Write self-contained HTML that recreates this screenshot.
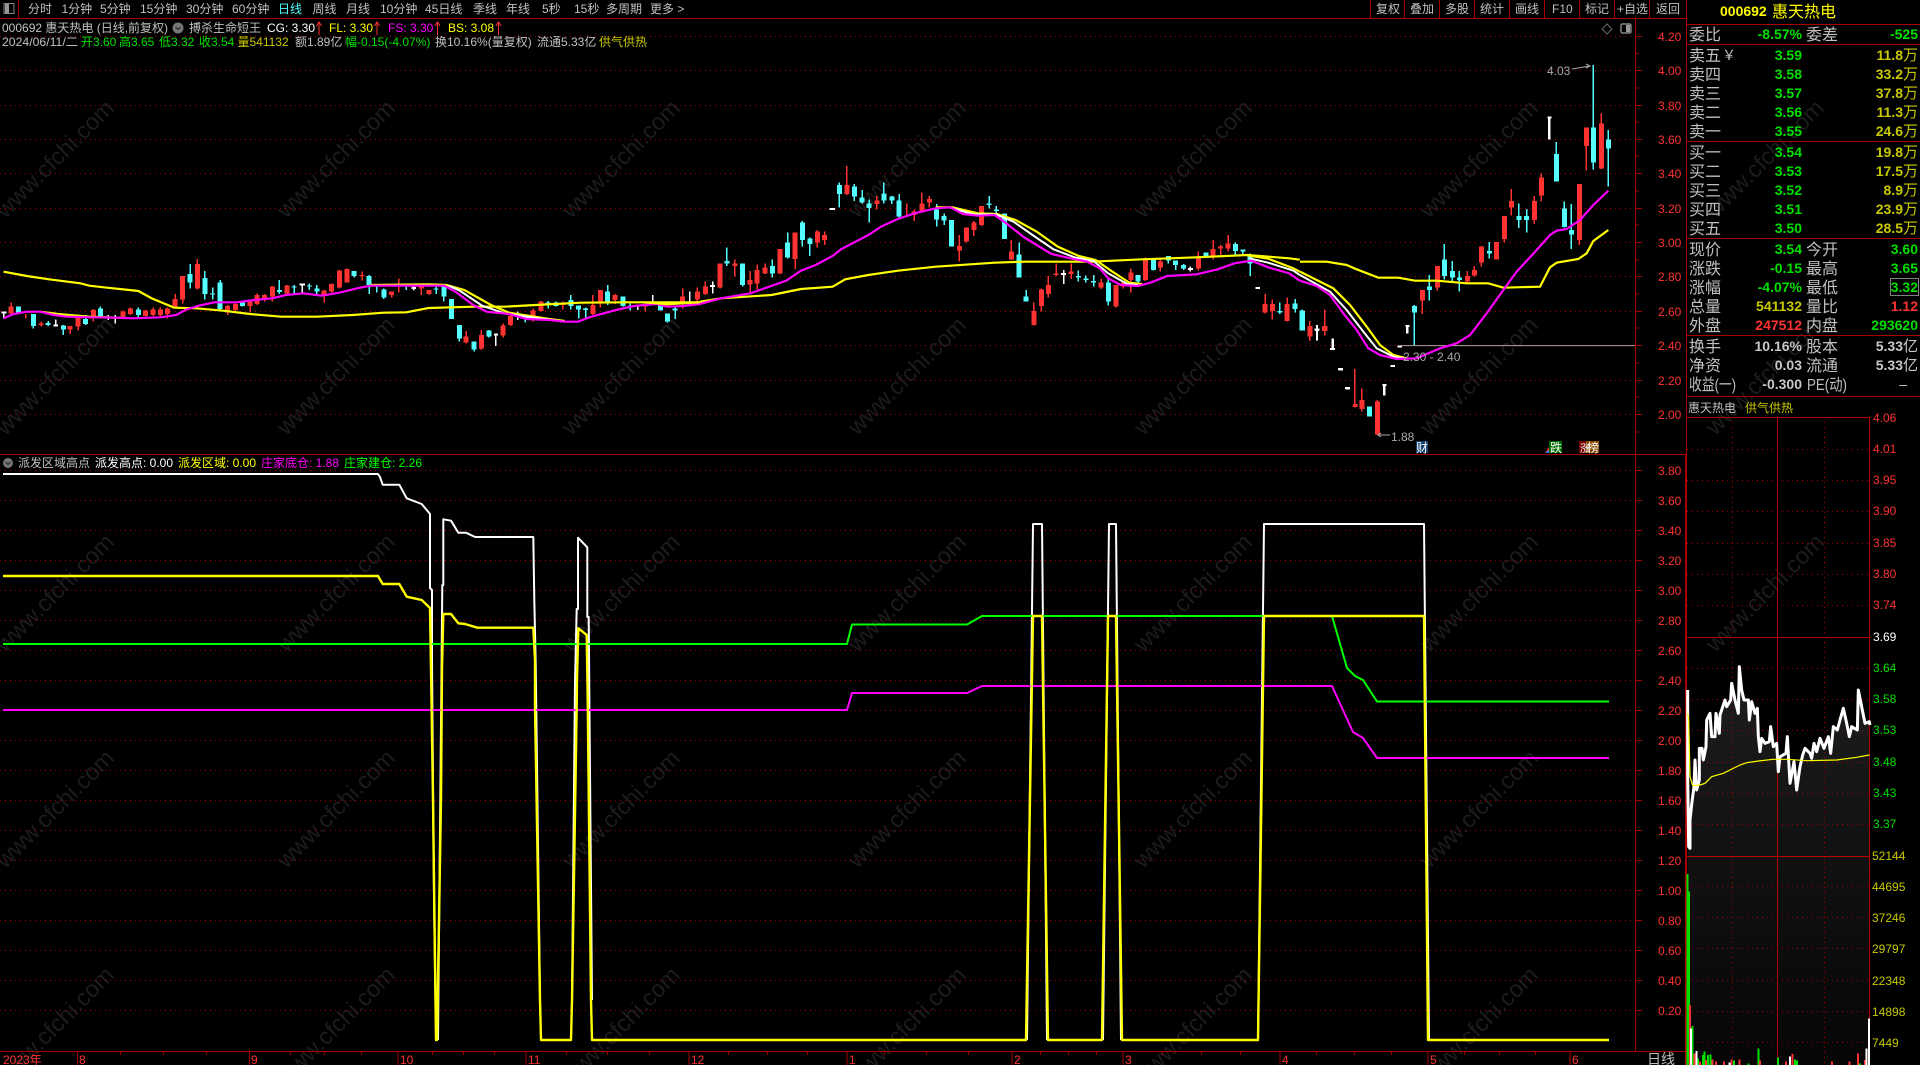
<!DOCTYPE html>
<html lang="zh"><head><meta charset="utf-8"><title>000692 惠天热电</title>
<style>
html,body{margin:0;padding:0;background:#000;width:1920px;height:1065px;overflow:hidden}
svg{display:block;position:absolute;left:0;top:0}
text{font-family:"Liberation Sans","WenQuanYi Zen Hei","Noto Sans CJK SC",sans-serif;font-size:12px;fill:#c0c0c0}
.v path,.v polyline{vector-effect:non-scaling-stroke;fill:none}
.wm text{font-size:23.5px;fill:#1c1c1c}
.ax text{fill:#ff3232}
.l text{font-size:16px}
.n text{font-weight:bold;font-size:14px;text-anchor:end}
.g{fill:#00e000!important}.o{fill:#c8c800!important}.r{fill:#ff3232!important}.w{fill:#c8c8c8!important}
.u{font-weight:normal;font-size:15px}
.gd line{stroke:#a00000;stroke-dasharray:1 4;stroke-width:1}
.sl line,.sl path{stroke:#a80000;stroke-width:1;fill:none}
.cr{shape-rendering:crispEdges}
</style></head><body>
<svg width="1920" height="1065" viewBox="0 0 1920 1065" xmlns="http://www.w3.org/2000/svg">
<defs><linearGradient id="fg" x1="0" y1="0" x2="0" y2="1"><stop offset="0" stop-color="#1e1e1e"/><stop offset=".45" stop-color="#121212"/><stop offset="1" stop-color="#060606"/></linearGradient></defs>
<rect width="1920" height="1065" fill="#000"/>

<!-- watermark -->
<g class="wm">
<text transform="translate(54,158) rotate(-45)" text-anchor="middle" y="9">www.cfchi.com</text>
<text transform="translate(335,158) rotate(-45)" text-anchor="middle" y="9">www.cfchi.com</text>
<text transform="translate(620,158) rotate(-45)" text-anchor="middle" y="9">www.cfchi.com</text>
<text transform="translate(906,158) rotate(-45)" text-anchor="middle" y="9">www.cfchi.com</text>
<text transform="translate(1192,158) rotate(-45)" text-anchor="middle" y="9">www.cfchi.com</text>
<text transform="translate(1478,158) rotate(-45)" text-anchor="middle" y="9">www.cfchi.com</text>
<text transform="translate(1764,158) rotate(-45)" text-anchor="middle" y="9">www.cfchi.com</text>
<text transform="translate(54,375) rotate(-45)" text-anchor="middle" y="9">www.cfchi.com</text>
<text transform="translate(335,375) rotate(-45)" text-anchor="middle" y="9">www.cfchi.com</text>
<text transform="translate(620,375) rotate(-45)" text-anchor="middle" y="9">www.cfchi.com</text>
<text transform="translate(906,375) rotate(-45)" text-anchor="middle" y="9">www.cfchi.com</text>
<text transform="translate(1192,375) rotate(-45)" text-anchor="middle" y="9">www.cfchi.com</text>
<text transform="translate(1478,375) rotate(-45)" text-anchor="middle" y="9">www.cfchi.com</text>
<text transform="translate(1764,375) rotate(-45)" text-anchor="middle" y="9">www.cfchi.com</text>
<text transform="translate(54,592) rotate(-45)" text-anchor="middle" y="9">www.cfchi.com</text>
<text transform="translate(335,592) rotate(-45)" text-anchor="middle" y="9">www.cfchi.com</text>
<text transform="translate(620,592) rotate(-45)" text-anchor="middle" y="9">www.cfchi.com</text>
<text transform="translate(906,592) rotate(-45)" text-anchor="middle" y="9">www.cfchi.com</text>
<text transform="translate(1192,592) rotate(-45)" text-anchor="middle" y="9">www.cfchi.com</text>
<text transform="translate(1478,592) rotate(-45)" text-anchor="middle" y="9">www.cfchi.com</text>
<text transform="translate(1764,592) rotate(-45)" text-anchor="middle" y="9">www.cfchi.com</text>
<text transform="translate(54,808) rotate(-45)" text-anchor="middle" y="9">www.cfchi.com</text>
<text transform="translate(335,808) rotate(-45)" text-anchor="middle" y="9">www.cfchi.com</text>
<text transform="translate(620,808) rotate(-45)" text-anchor="middle" y="9">www.cfchi.com</text>
<text transform="translate(906,808) rotate(-45)" text-anchor="middle" y="9">www.cfchi.com</text>
<text transform="translate(1192,808) rotate(-45)" text-anchor="middle" y="9">www.cfchi.com</text>
<text transform="translate(1478,808) rotate(-45)" text-anchor="middle" y="9">www.cfchi.com</text>
<text transform="translate(1764,808) rotate(-45)" text-anchor="middle" y="9">www.cfchi.com</text>
<text transform="translate(54,1025) rotate(-45)" text-anchor="middle" y="9">www.cfchi.com</text>
<text transform="translate(335,1025) rotate(-45)" text-anchor="middle" y="9">www.cfchi.com</text>
<text transform="translate(620,1025) rotate(-45)" text-anchor="middle" y="9">www.cfchi.com</text>
<text transform="translate(906,1025) rotate(-45)" text-anchor="middle" y="9">www.cfchi.com</text>
<text transform="translate(1192,1025) rotate(-45)" text-anchor="middle" y="9">www.cfchi.com</text>
<text transform="translate(1478,1025) rotate(-45)" text-anchor="middle" y="9">www.cfchi.com</text>
<text transform="translate(1764,1025) rotate(-45)" text-anchor="middle" y="9">www.cfchi.com</text>
</g>

<!-- grids -->
<g class="gd cr">
<line x1="0" x2="1635" y1="36.5" y2="36.5"/><line x1="0" x2="1635" y1="70.5" y2="70.5"/><line x1="0" x2="1635" y1="105.5" y2="105.5"/><line x1="0" x2="1635" y1="139.5" y2="139.5"/><line x1="0" x2="1635" y1="173.5" y2="173.5"/><line x1="0" x2="1635" y1="208.5" y2="208.5"/><line x1="0" x2="1635" y1="242.5" y2="242.5"/><line x1="0" x2="1635" y1="276.5" y2="276.5"/><line x1="0" x2="1635" y1="311.5" y2="311.5"/><line x1="0" x2="1635" y1="345.5" y2="345.5"/><line x1="0" x2="1635" y1="380.5" y2="380.5"/><line x1="0" x2="1635" y1="414.5" y2="414.5"/>
<line x1="0" x2="1635" y1="470.5" y2="470.5"/><line x1="0" x2="1635" y1="500.5" y2="500.5"/><line x1="0" x2="1635" y1="530.5" y2="530.5"/><line x1="0" x2="1635" y1="560.5" y2="560.5"/><line x1="0" x2="1635" y1="590.5" y2="590.5"/><line x1="0" x2="1635" y1="620.5" y2="620.5"/><line x1="0" x2="1635" y1="650.5" y2="650.5"/><line x1="0" x2="1635" y1="680.5" y2="680.5"/><line x1="0" x2="1635" y1="710.5" y2="710.5"/><line x1="0" x2="1635" y1="740.5" y2="740.5"/><line x1="0" x2="1635" y1="770.5" y2="770.5"/><line x1="0" x2="1635" y1="800.5" y2="800.5"/><line x1="0" x2="1635" y1="830.5" y2="830.5"/><line x1="0" x2="1635" y1="860.5" y2="860.5"/><line x1="0" x2="1635" y1="890.5" y2="890.5"/><line x1="0" x2="1635" y1="920.5" y2="920.5"/><line x1="0" x2="1635" y1="950.5" y2="950.5"/><line x1="0" x2="1635" y1="980.5" y2="980.5"/><line x1="0" x2="1635" y1="1010.5" y2="1010.5"/>
</g>

<!-- candles A -->
<g class="v cr" transform="translate(0,240) scale(.44643,.33333)">
<path stroke="#ff3232" stroke-width="1.5" d="M25 187V225M58 222V235M92 245V260M157 258V282M175 230V272M209 207V245M276 212V235M292 202V225M326 210V230M343 202V228M359 202V232M375 202V235M392 162V205M409 108V190M442 57V148M510 195V225M527 190V218M560 182V217M576 160V195M593 162V185M610 138V185M643 135V165M726 150V188M743 130V160M760 90V145M777 85V128M811 95V122M877 155V172M893 115V158M944 130V165M961 150V165M1044 273V310M1078 270V330M1127 250V292M1144 225V258M1194 205V245M1212 183V215M1261 185V208M1328 165V225M1345 150V202M1378 162V192M1445 190V215M1529 145V205M1562 142V185"/>
<path stroke="#ff3232" stroke-width="5" d="M25 200V220M92 250V255M157 258V268M175 232V260M209 210V230M276 215V230M292 205V222M326 212V228M343 208V225M359 208V225M375 205V222M392 177V203M409 108V178M442 72V145M510 198V218M527 192V210M560 185V198M576 165V192M593 165V175M610 140V170M643 136V160M726 152V168M743 132V155M760 92V142M777 87V128M811 105V108M877 155V165M893 135V140M944 140V145M961 150V162M1044 290V307M1078 285V325M1127 257V287M1144 228V255M1194 212V230M1212 185V213M1261 190V195M1328 195V222M1345 150V185M1378 165V180M1445 195V200M1529 170V185M1562 155V178"/>
<path stroke="#54ffff" stroke-width="1.5" d="M41 200V220M75 222V265M108 243V258M142 255V285M192 225V255M225 200V230M310 202V232M426 72V145M459 93V178M476 143V178M493 120V208M543 185V200M626 120V162M659 135V165M693 130V150M710 135V165M793 93V112M827 105V162M844 140V158M860 145V177M910 130V150M977 140V162M994 135V185M1029 255V305M1062 305V335M1095 270V292M1177 225V248M1228 183V205M1245 185V200M1279 165V208M1296 197V235M1312 203V235M1361 135V195M1396 170V200M1412 190V212M1479 190V212M1495 220V248M1512 200V237"/>
<path stroke="#54ffff" stroke-width="5" d="M41 200V220M75 222V258M108 249V255M142 257V268M192 237V252M225 205V228M310 208V225M426 102V128M459 114V162M476 160V163M493 127V207M543 188V198M626 150V156M659 140V143M693 136V140M710 145V155M793 93V108M827 108V135M860 148V172M977 145V148M994 140V170M1011 177V237M1029 255V295M1062 305V328M1095 272V290M1177 230V235M1228 188V190M1245 187V198M1279 180V198M1296 197V208M1312 205V210M1361 155V185M1396 170V198M1412 197V200M1479 195V212M1495 220V245M1512 205V212"/>
<path stroke="#fff" stroke-width="1.5" d="M8 215V235M125 238V258M242 225V240M258 225V250M677 130V160M927 138V152M1111 282V318M1160 215V240M1428 195V210M1462 165V195M1545 155V200"/>
<path stroke="#fff" stroke-width="2" d="M3 218H14M120 256H130M671 133H683M1106 284H1116M922 144H932"/>
</g>
<!-- candles B -->
<g class="v cr" transform="translate(700,150) scale(.42088,.33333)">
<path stroke="#ff3232" stroke-width="1.5" d="M13 395V435M48 340V415M83 328V380M119 363V430M136 343V418M155 340V372M190 297V372M226 247V357M279 240V292M296 245V285M349 48V135M420 138V178M491 160V195M509 178V213M527 127V185M545 138V172M616 255V335M633 232V278M651 213V258M669 168V228M740 270V330M793 457V527M811 415V485M828 378V443M846 340V378M882 340V387M953 385V417M988 405V473M1006 395V415M1024 355V428M1058 323V393M1094 325V365M1184 305V362M1219 270V328M1237 285V315M1255 255V305M1343 432V490M1360 448V508M1395 442V515M1449 513V572M1484 478V557M1556 657V772"/>
<path stroke="#ff3232" stroke-width="5" d="M13 410V432M48 340V412M83 340V348M119 390V403M136 360V400M155 352V370M190 297V370M226 247V327M279 245V277M296 255V270M349 105V132M420 152V162M509 185V195M527 160V183M545 147V158M616 288V302M633 232V275M651 218V240M669 168V225M740 305V328M793 483V525M811 418V468M828 405V432M846 370V375M882 365V372M953 397V412M988 405V470M1006 398V410M1024 368V390M1058 325V390M1094 335V352M1184 320V355M1219 297V320M1237 290V295M1255 280V295M1343 462V488M1360 462V483M1395 462V513M1449 528V560M1484 528V543M1556 767V771"/>
<path stroke="#54ffff" stroke-width="1.5" d="M64 292V348M101 340V410M172 328V382M208 247V325M243 213V290M261 262V318M331 97V173M367 102V153M385 120V160M402 148V218M437 97V160M456 138V162M473 132V202M562 162V230M580 190V225M598 210V290M687 138V175M704 168V192M723 190V267M758 277V383M775 420V455M899 362V395M917 377V398M935 375V410M970 385V467M1041 375V397M1077 325V362M1113 318V340M1130 332V360M1149 342V360M1202 307V318M1272 278V318M1290 298V318M1307 310V378M1378 458V492M1414 447V487M1431 478V542"/>
<path stroke="#54ffff" stroke-width="5" d="M64 333V340M101 340V405M172 348V370M208 277V323M243 218V270M261 265V282M331 105V132M367 110V140M385 142V158M402 160V174M437 130V152M456 140V152M473 152V200M562 178V208M580 198V212M598 210V290M687 160V165M704 178V183M723 190V267M758 313V383M775 440V455M899 378V383M917 385V390M935 393V397M970 397V455M1041 375V395M1077 325V360M1113 318V332M1130 332V345M1149 345V355M1202 307V318M1272 282V303M1290 298V305M1307 320V340M1378 483V488M1414 460V477M1431 483V542"/>
<path stroke="#fff" stroke-width="1.5" d="M30 395V430M864 360V402M1165 350V365M1466 525V572M1502 565V598"/>
<path stroke="#fff" stroke-width="2" d="M24 408H36M858 372H870M1159 357H1171M1460 538H1472M1497 597H1509M308 177H321M1320 414H1331M1516 657H1528M1533 714H1544"/>
</g>
<!-- candles C -->
<g class="v cr" transform="translate(1300,40) scale(.33333)">
<path stroke="#ff3232" stroke-width="1.5" d="M165 988V1100M186 1045V1115M232 1080V1185M367 750V822M412 678V752M502 693V727M523 678V710M544 618V680M589 606V658M613 528V608M634 447V527M703 468V552M724 400V485M838 432V615M859 262V392M904 220V387"/>
<path stroke="#ff3232" stroke-width="5" d="M186 1080V1107M232 1085V1183M367 750V782M412 678V742M502 708V725M523 690V707M544 620V668M589 606V658M613 528V597M634 483V503M703 483V540M724 412V467M838 432V600M859 262V318M904 250V385"/>
<path stroke="#ff3232" stroke-width="3" d="M159 1097H172"/>
<path stroke="#54ffff" stroke-width="1.5" d="M343 795V915M388 705V782M433 612V718M457 663V725M478 693V755M568 606V656M657 490V564M680 507V578M769 306V425M793 484V563M814 492V627M880 75V388M925 270V440"/>
<path stroke="#54ffff" stroke-width="5" d="M208 1100V1130M343 798V818M388 740V750M433 658V708M457 693V713M478 713V720M568 633V640M657 528V540M680 528V540M769 342V425M793 505V561M814 570V583M880 262V368M925 298V325M6 812V872"/>
<path stroke="#ff3232" stroke-width="1.5" d="M30 843V903M75 808V887"/>
<path stroke="#ff3232" stroke-width="5" d="M30 858V890M75 858V873"/>
<path stroke="#fff" stroke-width="2.2" d="M51 855V902M98 895V928M253 1035V1067M322 858V880M748 233V298"/>
<path stroke="#fff" stroke-width="2" d="M45 870H57M91 927H104M247 1035H260M316 858H328M742 233H755M115 988H129M136 1045H150M271 978H285M292 920H306"/>
</g>

<!-- MAs -->
<g class="v">
<g transform="translate(0,240) scale(.44643,.33333)">
<polyline stroke="#ffff00" stroke-width="2.2" points="8,95 60,108 110,118 180,130 200,137 240,143 310,153 340,175 390,203 440,205 500,212 560,222 630,230 710,230 790,225 860,218 910,217 960,204 1060,200 1130,200 1200,195 1300,188 1400,187 1568,187"/>
<polyline stroke="#ffff00" stroke-width="2.2" points="90,215 130,222 200,230 280,234"/>
<polyline stroke="#ffff00" stroke-width="2.2" points="830,135 960,133 1000,135 1040,150 1100,195 1140,218 1230,237 1265,243"/>
<polyline stroke="#ffffff" stroke-width="2" points="1005,137 1030,152 1080,197 1130,220 1190,232 1265,245"/>
<polyline stroke="#ff00ff" stroke-width="2.2" points="8,235 30,222 60,215 90,215 120,225 150,230 200,232 260,233 300,235 360,232 395,225 415,210 445,197 480,187 530,187 570,180 610,175 640,165 680,160 720,167 760,158 800,145 830,137 900,137 995,137 1020,155 1060,195 1090,215 1140,222 1180,237 1230,240 1265,245 1295,245 1320,232 1380,210 1420,198 1470,192 1495,200 1530,198 1568,192"/>
<polyline stroke="#ffff00" stroke-width="2.2" points="1440,187 1470,190 1495,193 1530,190 1568,187"/>
</g>
<g transform="translate(700,150) scale(.42088,.33333)">
<polyline stroke="#ffff00" stroke-width="2.2" points="0,455 50,445 170,435 240,417 315,410 345,388 400,375 470,362 560,350 700,338 770,335 930,335 1050,328 1180,322 1300,315 1400,325 1425,329"/>
<polyline stroke="#ffff00" stroke-width="2.2" points="560,172 600,172 660,190 705,192 750,210 800,245 850,290 900,318 940,330 980,365 1020,398 1050,402"/>
<polyline stroke="#ffffff" stroke-width="2" points="595,173 650,193 705,194 745,215 790,255 840,298 890,322 935,333 970,370 1015,402 1040,405"/>
<polyline stroke="#ffff00" stroke-width="2.2" points="1300,316 1350,326 1410,355 1425,365"/>
<polyline stroke="#ffffff" stroke-width="2" points="1305,325 1350,338 1410,362 1425,375"/>
<polyline stroke="#ff00ff" stroke-width="2.2" points="0,462 50,445 120,430 160,412 205,392 240,362 275,345 315,318 335,298 400,255 430,230 470,207 510,190 560,175 595,172 625,192 660,197 700,195 730,222 770,262 800,285 835,312 880,325 920,335 950,355 970,385 1000,405 1040,408 1070,398 1110,378 1180,373 1230,358 1270,340 1310,332 1350,352 1400,370 1425,392"/>
</g>
<g transform="translate(1300,40) scale(.33333)">
<polyline stroke="#b0a0a0" stroke-width="1" points="300,917 1005,917"/>
<polyline stroke="#ffff00" stroke-width="2.2" points="0,665 80,665 140,675 170,688 235,713 295,713 345,722 410,722 500,730 565,730 610,743 720,740 750,682 770,668 835,657 860,640 880,603 925,570"/>
<polyline stroke="#ffff00" stroke-width="2.2" points="0,695 50,720 100,745 150,795 200,860 240,915 280,945 320,955"/>
<polyline stroke="#ffffff" stroke-width="2" points="0,705 90,755 140,810 190,875 230,925 280,950 310,955"/>
<polyline stroke="#ff00ff" stroke-width="2.2" points="0,722 50,738 90,765 130,820 170,870 205,925 240,945 290,957 350,955 420,925 470,910 510,885 560,820 610,750 650,695 710,630 750,585 770,572 800,567 840,540 880,495 925,452"/>
</g>
</g>

<!-- chart annotations -->
<text x="1547" y="75" style="fill:#a8a8a8">4.03</text>
<path d="M1572 69L1590 66M1586 64l4 2-4 2" stroke="#a8a8a8" fill="none"/>
<text x="1403" y="361" style="fill:#a8a8a8">2.30 - 2.40</text>
<path d="M1378 435H1390M1381 433l-3 2 3 2" stroke="#a8a8a8" fill="none"/>
<text x="1391" y="441" style="fill:#a8a8a8">1.88</text>
<rect x="1416" y="441" width="12" height="12" fill="#123f70"/><text x="1416" y="452" style="fill:#fff">财</text>
<path d="M1545 453l4-6v6z" fill="#ff3232"/><path d="M1545 453l4-3v3z" fill="#2080ff"/>
<rect x="1549" y="441" width="13" height="12" fill="#006c00"/><text x="1550" y="452" style="fill:#fff">跌</text>
<rect x="1579" y="441" width="7" height="12" fill="#7a0000"/><rect x="1586" y="441" width="13" height="12" fill="#8a4a00"/><text x="1580" y="452" style="fill:#fff;font-size:10px">涨</text><text x="1587" y="452" style="fill:#fff">榜</text>
<path d="M1607 24l5 5-5 5-5-5z" stroke="#666" fill="none"/>
<rect x="1621" y="24" width="10" height="9" rx="1.5" stroke="#888" stroke-width="1.5" fill="#000"/><rect x="1626" y="25" width="4" height="7" fill="#999"/>

<!-- lower panel lines -->
<g fill="none" stroke-linejoin="round">
<polyline stroke="#fff" stroke-width="2" points="3,474 378,474 380,477 382.7,484.7 399.3,484.7 406.7,498.3 421.7,504 430,514 430,588 432,590 432,663 434,900 436,1040"/>
<polyline stroke="#fff" stroke-width="2" points="438,1040 441.7,650 442.3,585 443.3,585 443.3,519.3 451,520.7 458.3,532.7 466,532.7 475,537 533.3,537 534.3,600 535.7,663 540,1000"/>
<polyline stroke="#fff" stroke-width="2" points="572,1000 575,682 576.7,609 578,609 578,537.7 587.3,547.3 587.3,617 588.7,617 589.3,693 592,1000"/>
<polyline stroke="#fff" stroke-width="2" points="1027,1040 1033,524 1042,524 1047,1040"/>
<polyline stroke="#fff" stroke-width="2" points="1103,1040 1109,524 1116,524 1121,1040"/>
<polyline stroke="#fff" stroke-width="2" points="1258,1040 1264,524 1424,524 1429,1040"/>
<polyline stroke="#00ff00" stroke-width="2" points="3,644 847,644 852,624.5 967,624.5 982,616 1332,616 1347,668 1355,676 1363,680 1377,701.5 1609,701.5"/>
<polyline stroke="#ff00ff" stroke-width="2" points="3,710 847,710 852,693 967,693 982,686 1332,686 1353,732 1363,738 1377,758 1609,758"/>
<polyline stroke="#ffff00" stroke-width="2.4" points="3,576 378,576 382.7,584 399.3,584 406.7,596.7 421.7,600 430,608 431,669 433,800 436,1040 437,1040 441,800 442,669 443.3,614 451,614 458.3,623.3 465,624 477.3,627.7 533.3,627.7 535,660 535,707 540,1000 541,1040 571,1040 572,1000 576.7,707 577,680 578.3,628.3 586.7,635 587.7,700 591,1000 592,1040 1026,1040 1033,616 1042,616 1048,1040 1102,1040 1108,616 1116,616 1122,1040 1258,1040 1264,616 1424,616 1428,1040 1609,1040"/>
</g>

<!-- structure -->
<g class="sl cr">
<path d="M0 18.5H1686M0 454.5H1686M1635.5 18V1052M18.5 0V18M1370.5 0V18M1404.5 0V18M1439.5 0V18M1474.5 0V18M1509.5 0V18M1544.5 0V18M1579.5 0V18M1614.5 0V18M1649.5 0V18"/>
<path d="M1686.5 0V1065M1686 24.5H1920M1686 44.5H1920M1686 141.5H1920M1686 238.5H1920M1686 335.5H1920M1686 396.5H1920"/>
<path d="M0 1051.5H1686" stroke-width="2"/>
<path d="M1685.5 454V1065" stroke-width="2"/>
<path d="M1636 36.5h6M1636 53.5h3M1636 70.5h6M1636 88h3M1636 105.5h6M1636 122h3M1636 139.5h6M1636 156h3M1636 173.5h6M1636 191h3M1636 208.5h6M1636 225h3M1636 242.5h6M1636 260h3M1636 276.5h6M1636 294h3M1636 311.5h6M1636 328h3M1636 345.5h6M1636 363h3M1636 380.5h6M1636 397h3M1636 414.5h6M1636 432h3"/>
<path d="M1636 470.5h6M1636 500.5h6M1636 530.5h6M1636 560.5h6M1636 590.5h6M1636 620.5h6M1636 650.5h6M1636 680.5h6M1636 710.5h6M1636 740.5h6M1636 770.5h6M1636 800.5h6M1636 830.5h6M1636 860.5h6M1636 890.5h6M1636 920.5h6M1636 950.5h6M1636 980.5h6M1636 1010.5h6"/>
<path d="M77.5 1052v13M249.5 1052v13M398 1052v13M526 1052v13M689 1052v13M847 1052v13M1012 1052v13M1123 1052v13M1280 1052v13M1428 1052v13M1570 1052v13"/>
<path d="M120.5 1052v3M163.5 1052v3M206.5 1052v3M290.5 1052v3M324.5 1052v3M361.5 1052v3M432.5 1052v3M463.5 1052v3M494.5 1052v3M566.5 1052v3M607.5 1052v3M649.5 1052v3M728.5 1052v3M767.5 1052v3M807.5 1052v3M884.5 1052v3M926.5 1052v3M968.5 1052v3M1040.5 1052v3M1068.5 1052v3M1096.5 1052v3M1162.5 1052v3M1201.5 1052v3M1240.5 1052v3M1316.5 1052v3M1354.5 1052v3M1391.5 1052v3M1464.5 1052v3M1499.5 1052v3M1535.5 1052v3"/>
</g>

<!-- toolbar -->
<path d="M4 3.5h10v10H4z" stroke="#888" fill="none"/><rect x="5" y="4" width="4" height="9" fill="#999"/>
<g>
<text x="28" y="13">分时</text><text x="61.5" y="13">1分钟</text><text x="100" y="13">5分钟</text><text x="140" y="13">15分钟</text><text x="186" y="13">30分钟</text><text x="232" y="13">60分钟</text>
<text x="278" y="13" style="fill:#54ffff">日线</text>
<text x="312.5" y="13">周线</text><text x="346" y="13">月线</text><text x="380" y="13">10分钟</text><text x="425" y="13">45日线</text><text x="473" y="13">季线</text><text x="506" y="13">年线</text><text x="542" y="13">5秒</text><text x="574" y="13">15秒</text><text x="606" y="13">多周期</text><text x="650" y="13">更多 &gt;</text>
<text x="1376" y="13">复权</text><text x="1410" y="13">叠加</text><text x="1445" y="13">多股</text><text x="1480" y="13">统计</text><text x="1515" y="13">画线</text><text x="1552" y="13">F10</text><text x="1585" y="13">标记</text><text x="1617" y="13">+自选</text><text x="1656" y="13">返回</text>
</g>

<!-- info lines -->
<text x="2" y="32">000692 惠天热电 (日线,前复权)</text>
<circle cx="178" cy="28" r="5.5" fill="#777"/><path d="M175.5 27l2.5 2.5 2.5-2.5" stroke="#222" fill="none"/>
<text x="189" y="32">搏杀生命短王</text>
<text x="267" y="32" style="fill:#fff">CG: 3.30</text><text x="329" y="32" style="fill:#ffff00">FL: 3.30</text><text x="388" y="32" style="fill:#ff00ff">FS: 3.30</text><text x="448" y="32" style="fill:#ffff00">BS: 3.08</text>
<path d="M319 35V23M316.5 26l2.500-4 2.500 4M377 35V23M374.5 26l2.500-4 2.500 4M437.5 35V23M435 26l2.500-4 2.500 4M498.5 35V23M496 26l2.500-4 2.500 4" stroke="#ff3232" fill="none"/>
<text x="2" y="46" textLength="76" lengthAdjust="spacingAndGlyphs">2024/06/11/二</text>
<text x="81" y="46" class="g">开3.60</text><text x="119" y="46" class="g">高3.65</text><text x="159" y="46" class="g">低3.32</text><text x="199" y="46" class="g">收3.54</text>
<text x="237.5" y="46" class="o">量541132</text><text x="295" y="46">额1.89亿</text><text x="345" y="46" class="g">幅-0.15(-4.07%)</text><text x="435" y="46">换10.16%(量复权)</text><text x="537" y="46">流通5.33亿</text><text x="599" y="46" class="o">供气供热</text>
<circle cx="8" cy="463" r="5" fill="#777"/><path d="M5.5 462l2.500 2.500 2.500-2.500" stroke="#222" fill="none"/>
<text x="18" y="467">派发区域高点</text><text x="95" y="467" style="fill:#fff">派发高点: 0.00</text><text x="178" y="467" style="fill:#ffff00">派发区域: 0.00</text><text x="261" y="467" style="fill:#ff00ff">庄家底仓: 1.88</text><text x="344" y="467" style="fill:#00ff00">庄家建仓: 2.26</text>

<!-- axis labels -->
<g class="ax">
<text x="1658" y="41">4.20</text><text x="1658" y="75">4.00</text><text x="1658" y="110">3.80</text><text x="1658" y="144">3.60</text><text x="1658" y="178">3.40</text><text x="1658" y="213">3.20</text><text x="1658" y="247">3.00</text><text x="1658" y="281">2.80</text><text x="1658" y="316">2.60</text><text x="1658" y="350">2.40</text><text x="1658" y="385">2.20</text><text x="1658" y="419">2.00</text>
<text x="1658" y="475">3.80</text><text x="1658" y="505">3.60</text><text x="1658" y="535">3.40</text><text x="1658" y="565">3.20</text><text x="1658" y="595">3.00</text><text x="1658" y="625">2.80</text><text x="1658" y="655">2.60</text><text x="1658" y="685">2.40</text><text x="1658" y="715">2.20</text><text x="1658" y="745">2.00</text><text x="1658" y="775">1.80</text><text x="1658" y="805">1.60</text><text x="1658" y="835">1.40</text><text x="1658" y="865">1.20</text><text x="1658" y="895">1.00</text><text x="1658" y="925">0.80</text><text x="1658" y="955">0.60</text><text x="1658" y="985">0.40</text><text x="1658" y="1015">0.20</text>
<text x="3" y="1064">2023年</text><text x="79" y="1064">8</text><text x="251" y="1064">9</text><text x="400" y="1064">10</text><text x="528" y="1064">11</text><text x="691" y="1064">12</text><text x="849" y="1064">1</text><text x="1014" y="1064">2</text><text x="1125" y="1064">3</text><text x="1282" y="1064">4</text><text x="1430" y="1064">5</text><text x="1572" y="1064">6</text>
</g>
<text x="1647" y="1064" style="font-size:14px">日线</text>

<!-- right panel -->
<text x="1720" y="16" style="fill:#ffff00;font-weight:bold;font-size:14px">000692</text><text x="1772" y="17" style="fill:#ffff00;font-size:16px">惠天热电</text>
<g class="l">
<text x="1689" y="40">委比</text><text x="1806" y="40">委差</text>
<text x="1689" y="61">卖五</text><text x="1722" y="60" style="font-size:14px">￥</text><text x="1689" y="80">卖四</text><text x="1689" y="99">卖三</text><text x="1689" y="118">卖二</text><text x="1689" y="137">卖一</text>
<text x="1689" y="158">买一</text><text x="1689" y="177">买二</text><text x="1689" y="196">买三</text><text x="1689" y="215">买四</text><text x="1689" y="234">买五</text>
<text x="1689" y="255">现价</text><text x="1806" y="255">今开</text><text x="1689" y="274">涨跌</text><text x="1806" y="274">最高</text><text x="1689" y="293">涨幅</text><text x="1806" y="293">最低</text><text x="1689" y="312">总量</text><text x="1806" y="312">量比</text><text x="1689" y="331">外盘</text><text x="1806" y="331">内盘</text>
<text x="1689" y="352">换手</text><text x="1806" y="352">股本</text><text x="1689" y="371">净资</text><text x="1806" y="371">流通</text><text x="1689" y="390" textLength="47" lengthAdjust="spacingAndGlyphs">收益(一)</text><text x="1807" y="390" textLength="40" lengthAdjust="spacingAndGlyphs">PE(动)</text>
</g>
<rect x="1890.5" y="278.5" width="28" height="17" fill="none" stroke="#808080" class="cr"/>
<g class="n">
<text x="1802" y="39" class="g">-8.57%</text><text x="1918" y="39" class="g">-525</text>
<text x="1802" y="60" class="g">3.59</text><text x="1802" y="79" class="g">3.58</text><text x="1802" y="98" class="g">3.57</text><text x="1802" y="117" class="g">3.56</text><text x="1802" y="136" class="g">3.55</text>
<text x="1802" y="157" class="g">3.54</text><text x="1802" y="176" class="g">3.53</text><text x="1802" y="195" class="g">3.52</text><text x="1802" y="214" class="g">3.51</text><text x="1802" y="233" class="g">3.50</text>
<text x="1918" y="60" class="o">11.8<tspan class="u o">万</tspan></text><text x="1918" y="79" class="o">33.2<tspan class="u o">万</tspan></text><text x="1918" y="98" class="o">37.8<tspan class="u o">万</tspan></text><text x="1918" y="117" class="o">11.3<tspan class="u o">万</tspan></text><text x="1918" y="136" class="o">24.6<tspan class="u o">万</tspan></text>
<text x="1918" y="157" class="o">19.8<tspan class="u o">万</tspan></text><text x="1918" y="176" class="o">17.5<tspan class="u o">万</tspan></text><text x="1918" y="195" class="o">8.9<tspan class="u o">万</tspan></text><text x="1918" y="214" class="o">23.9<tspan class="u o">万</tspan></text><text x="1918" y="233" class="o">28.5<tspan class="u o">万</tspan></text>
<text x="1802" y="254" class="g">3.54</text><text x="1918" y="254" class="g">3.60</text><text x="1802" y="273" class="g">-0.15</text><text x="1918" y="273" class="g">3.65</text><text x="1802" y="292" class="g">-4.07%</text><text x="1918" y="292" class="g">3.32</text>
<text x="1802" y="311" class="o">541132</text><text x="1918" y="311" class="r">1.12</text><text x="1802" y="330" class="r">247512</text><text x="1918" y="330" class="g">293620</text>
<text x="1802" y="351" class="w">10.16%</text><text x="1918" y="351" class="w">5.33<tspan class="u w">亿</tspan></text><text x="1802" y="370" class="w">0.03</text><text x="1918" y="370" class="w">5.33<tspan class="u w">亿</tspan></text><text x="1802" y="389" class="w">-0.300</text><text x="1907" y="389" class="w" style="font-weight:normal">–</text>
</g>
<text x="1688" y="412">惠天热电</text><text x="1745" y="412" class="o">供气供热</text>

<!-- mini chart -->
<g transform="translate(1640,620) scale(.33333)" class="v">
<path d="M143 210L143 460L146 680L150 685L150 600L156 545L162 500L165 420L170 510L178 480L178 385L186 385L190 420L198 380L200 300L210 280L215 350L225 350L228 280L238 340L240 285L255 240L260 260L272 240L275 190L285 240L295 280L298 140L305 210L312 240L325 240L328 300L335 245L345 280L352 265L355 350L360 395L365 355L375 370L388 365L392 320L400 380L410 370L415 455L420 410L438 400L442 350L450 490L462 425L470 510L480 440L488 405L495 385L510 400L515 415L522 370L530 395L540 355L552 385L565 350L572 400L580 320L592 330L600 300L610 265L620 310L628 350L635 320L652 330L655 210L665 260L675 310L688 305V1335H143Z" style="fill:url(#fg)"/>
</g>
<g class="gd cr">
<line x1="1687" x2="1869" y1="449.5" y2="449.5"/><line x1="1687" x2="1869" y1="480.5" y2="480.5"/><line x1="1687" x2="1869" y1="511.5" y2="511.5"/><line x1="1687" x2="1869" y1="543.5" y2="543.5"/><line x1="1687" x2="1869" y1="574.5" y2="574.5"/><line x1="1687" x2="1869" y1="605.5" y2="605.5"/><line x1="1687" x2="1869" y1="668.5" y2="668.5"/><line x1="1687" x2="1869" y1="699.5" y2="699.5"/><line x1="1687" x2="1869" y1="730.5" y2="730.5"/><line x1="1687" x2="1869" y1="762.5" y2="762.5"/><line x1="1687" x2="1869" y1="793.5" y2="793.5"/><line x1="1687" x2="1869" y1="824.5" y2="824.5"/><line x1="1687" x2="1869" y1="886.5" y2="886.5"/><line x1="1687" x2="1869" y1="917.5" y2="917.5"/><line x1="1687" x2="1869" y1="948.5" y2="948.5"/><line x1="1687" x2="1869" y1="980.5" y2="980.5"/><line x1="1687" x2="1869" y1="1011.5" y2="1011.5"/><line x1="1687" x2="1869" y1="1042.5" y2="1042.5"/>
<line x1="1732.5" x2="1732.5" y1="417" y2="1065"/><line x1="1824.5" x2="1824.5" y1="417" y2="1065"/>
</g>
<g class="cr">
<line x1="1687" x2="1869" y1="417.5" y2="417.5" style="stroke:#b00000"/><line x1="1687" x2="1869" y1="637.5" y2="637.5" style="stroke:#b00000"/><line x1="1687" x2="1869" y1="856.5" y2="856.5" style="stroke:#c00000"/><line x1="1777.5" x2="1777.5" y1="417" y2="1065" style="stroke:#b00000"/><line x1="1869.5" x2="1869.5" y1="417" y2="1065" style="stroke:#b00000"/>
</g>
<g transform="translate(1640,620) scale(.33333)" class="v">
<path stroke="#ffffff" stroke-width="3" stroke-linejoin="round" d="M143 210L143 460L146 680L150 685L150 600L156 545L162 500L165 420L170 510L178 480L178 385L186 385L190 420L198 380L200 300L210 280L215 350L225 350L228 280L238 340L240 285L255 240L260 260L272 240L275 190L285 240L295 280L298 140L305 210L312 240L325 240L328 300L335 245L345 280L352 265L355 350L360 395L365 355L375 370L388 365L392 320L400 380L410 370L415 455L420 410L438 400L442 350L450 490L462 425L470 510L480 440L488 405L495 385L510 400L515 415L522 370L530 395L540 355L552 385L565 350L572 400L580 320L592 330L600 300L610 265L620 310L628 350L635 320L652 330L655 210L665 260L675 310L688 305L690 315"/>
<path stroke="#ffff00" stroke-width="1.2" d="M143 280L146 300L150 470L158 497L180 495L195 490L215 470L250 460L300 435L320 428L355 423L400 418L440 418L500 422L590 420L650 412L688 405"/>
<path class="cr" stroke="#00e000" stroke-width="2" d="M143 762V1335M147 815V1335M158 1218V1335M174 1315V1335M189 1305V1335M193 1295V1335M204 1305V1335M211 1303V1335M282 1322V1335M326 1330V1335M355 1285V1335M414 1312V1335M465 1318V1335M471 1322V1335M660 1330V1335"/>
<path class="cr" stroke="#ff3232" stroke-width="2" d="M150 1155V1335M163 1300V1335M180 1325V1335M198 1320V1335M217 1318V1335M228 1325V1335M252 1325V1335M274 1318V1335M298 1318V1335M360 1322V1335M438 1325V1335M458 1302V1335M576 1325V1335M628 1325V1335M654 1300V1335M675 1320V1335"/>
<path class="cr" stroke="#ffffff" stroke-width="2" d="M153 1225V1335M170 1293V1335M268 1328V1335M450 1310V1335M680 1285V1335M687 1195V1335"/>
</g>
<g>
<text x="1873" y="422" class="r">4.06</text><text x="1873" y="453" class="r">4.01</text><text x="1873" y="484" class="r">3.95</text><text x="1873" y="515" class="r">3.90</text><text x="1873" y="547" class="r">3.85</text><text x="1873" y="578" class="r">3.80</text><text x="1873" y="609" class="r">3.74</text>
<text x="1873" y="641" style="fill:#fff">3.69</text>
<text x="1873" y="672" class="g">3.64</text><text x="1873" y="703" class="g">3.58</text><text x="1873" y="734" class="g">3.53</text><text x="1873" y="766" class="g">3.48</text><text x="1873" y="797" class="g">3.43</text><text x="1873" y="828" class="g">3.37</text>
<text x="1872" y="860" class="o">52144</text><text x="1872" y="891" class="o">44695</text><text x="1872" y="922" class="o">37246</text><text x="1872" y="953" class="o">29797</text><text x="1872" y="985" class="o">22348</text><text x="1872" y="1016" class="o">14898</text><text x="1872" y="1047" class="o">7449</text>
</g>
</svg>
</body></html>
